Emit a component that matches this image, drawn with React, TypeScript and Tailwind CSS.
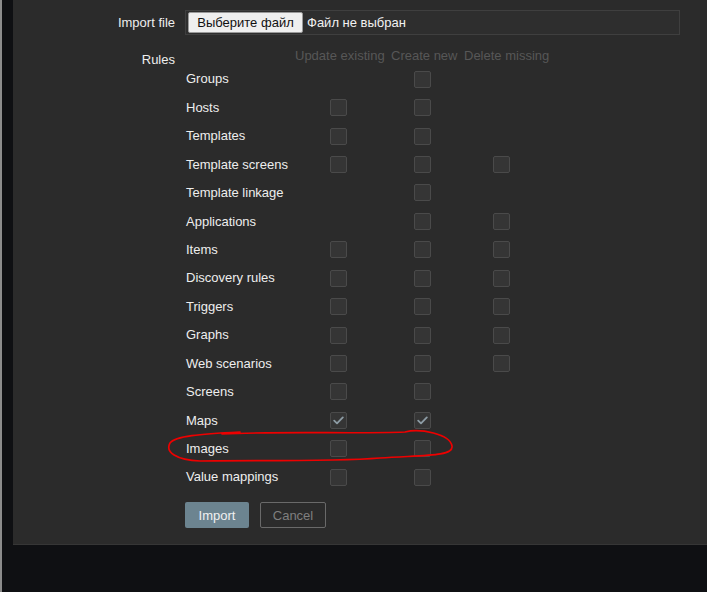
import React from 'react';

type Row = { name: string; cols: (null | 'off' | 'on')[] };

const rows: Row[] = [
  { name: 'Groups', cols: [null, 'off', null] },
  { name: 'Hosts', cols: ['off', 'off', null] },
  { name: 'Templates', cols: ['off', 'off', null] },
  { name: 'Template screens', cols: ['off', 'off', 'off'] },
  { name: 'Template linkage', cols: [null, 'off', null] },
  { name: 'Applications', cols: [null, 'off', 'off'] },
  { name: 'Items', cols: ['off', 'off', 'off'] },
  { name: 'Discovery rules', cols: ['off', 'off', 'off'] },
  { name: 'Triggers', cols: ['off', 'off', 'off'] },
  { name: 'Graphs', cols: ['off', 'off', 'off'] },
  { name: 'Web scenarios', cols: ['off', 'off', 'off'] },
  { name: 'Screens', cols: ['off', 'off', null] },
  { name: 'Maps', cols: ['on', 'on', null] },
  { name: 'Images', cols: ['off', 'off', null] },
  { name: 'Value mappings', cols: ['off', 'off', null] },
];

// left offset of the checkbox inside each column
const boxOffset = ['ml-[35px]', 'ml-[23px]', 'ml-[29px]'];

function Checkbox({ checked }: { checked: boolean }) {
  return (
    <div className="w-[17px] h-[17px] rounded-[2px] border border-[#4a4a4a] bg-[#353535] flex items-center justify-center">
      {checked && (
        <svg width="11" height="9" viewBox="0 0 11 9" fill="none">
          <path d="M1.2 4.6 L4 7.3 L9.8 1.4" stroke="#8d9ca5" strokeWidth="1.8" strokeLinecap="round" strokeLinejoin="round" />
        </svg>
      )}
    </div>
  );
}

export default function App() {
  return (
    <div
      className="relative w-[707px] h-[592px] bg-[#0f1013] flex overflow-hidden"
      style={{ fontFamily: '"Liberation Sans", Arial, sans-serif' }}
    >
      <div className="w-[2px] h-full bg-[#8c8c8c]" />
      <div className="ml-[11px] w-[694px] h-[545px] bg-[#2b2b2b] border-b border-[#363636] pt-[10px] text-[13px] text-[#eeeeee]">
        {/* Import file */}
        <div className="flex items-center">
          <div className="w-[162px] text-right">Import file</div>
          <div className="ml-[10px] w-[495px] h-[25px] border border-[#3f3f3f] bg-[#2e2e2e] flex items-center pl-[2px]">
            <div className="h-[21px] w-[115px] bg-[#efefef] border border-[#9a9a9a] rounded-[2px] text-[#111] flex items-center justify-center">
              Выберите файл
            </div>
            <span className="ml-[4px] text-[#f2f2f2]">Файл не выбран</span>
          </div>
        </div>

        {/* Rules */}
        <div className="flex mt-[12px]">
          <div className="w-[162px] text-right pt-[4px] leading-[18px]">Rules</div>
          <div className="ml-[10px]">
            <div className="grid grid-cols-[110px_96px_73px_86px] h-[18px] leading-[18px] text-[#575757]">
              <div />
              <div>Update existing</div>
              <div>Create new</div>
              <div>Delete missing</div>
            </div>
            {rows.map((r) => (
              <div key={r.name} className="grid grid-cols-[110px_96px_73px_86px] h-[28.43px] items-center">
                <div className="pl-[1px] whitespace-nowrap">{r.name}</div>
                {r.cols.map((c, i) => (
                  <div key={i} className={boxOffset[i]}>
                    {c && <Checkbox checked={c === 'on'} />}
                  </div>
                ))}
              </div>
            ))}
            <div className="flex gap-[11px] mt-[11px]">
              <button className="w-[64px] h-[26px] rounded-[2px] bg-[#6c8490] text-[#f0f0f0]">Import</button>
              <button className="w-[66px] h-[26px] rounded-[2px] border border-[#696969] text-[#7f7f7f]">Cancel</button>
            </div>
          </div>
        </div>
      </div>

      {/* hand-drawn red mark round the Images row */}
      <svg className="absolute left-0 top-0 pointer-events-none" width="707" height="592">
        <path
          d="M 222 434 C 280 431, 360 434, 405 432 C 420 428, 450 434, 452 446 C 454 457, 420 455, 380 458 C 330 462, 250 460, 200 461 C 176 460, 165 452, 170 443 C 175 436, 200 434, 240 432"
          fill="none"
          stroke="#ee0000"
          strokeWidth="1.6"
          strokeLinecap="round"
        />
      </svg>
    </div>
  );
}
